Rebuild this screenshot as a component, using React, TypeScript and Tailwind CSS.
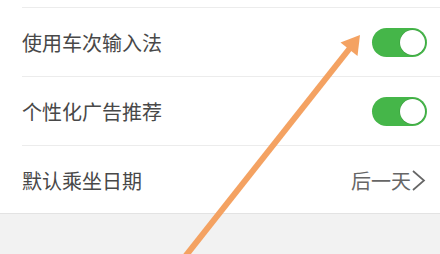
import React from "react";

const font = { fontFamily: '"Noto Sans CJK SC", "Noto Sans", sans-serif' };

function Toggle() {
  return (
    <div className="w-[55px] h-[29px] rounded-full bg-[#45b649] flex items-center justify-end pr-[2px]">
      <div className="w-[25px] h-[25px] rounded-full bg-white shadow-[0_0_0_0.5px_rgba(0,0,0,0.15)]" />
    </div>
  );
}

export default function App() {
  return (
    <div className="relative w-[440px] h-[254px] bg-[#f2f2f2] overflow-hidden" style={font}>
      <div className="bg-white border-b border-[#e3e3e3]">
        <div className="h-[7px]" />
        <div className="pl-[22px]">
          <div className="h-[69px] border-t border-[#ececec] flex items-center justify-between pr-[13px]">
            <span className="text-[20px] text-[#484848] pt-[2px]">使用车次输入法</span>
            <Toggle />
          </div>
          <div className="h-[69px] border-t border-[#ececec] flex items-center justify-between pr-[13px]">
            <span className="text-[20px] text-[#484848] pt-[2px]">个性化广告推荐</span>
            <Toggle />
          </div>
          <div className="h-[68px] border-t border-[#ececec] flex items-center justify-between pr-[14px]">
            <span className="text-[20px] text-[#484848] pt-[2px]">默认乘坐日期</span>
            <div className="flex items-center pt-[2px]">
              <span className="text-[20px] text-[#666]">后一天</span>
              <svg width="15" height="21" viewBox="0 0 15 21">
                <polyline points="2,1 13,10.5 2,20" fill="none" stroke="#666" strokeWidth="1.7" />
              </svg>
            </div>
          </div>
        </div>
      </div>

      {/* annotation arrow */}
      <svg className="absolute inset-0 pointer-events-none" width="440" height="254" viewBox="0 0 440 254">
        <line x1="180" y1="263" x2="350" y2="48" stroke="#f4a262" strokeWidth="6" />
        <polygon points="360,35 357.5,56 340.5,42.5" fill="#f4a262" />
      </svg>
    </div>
  );
}
